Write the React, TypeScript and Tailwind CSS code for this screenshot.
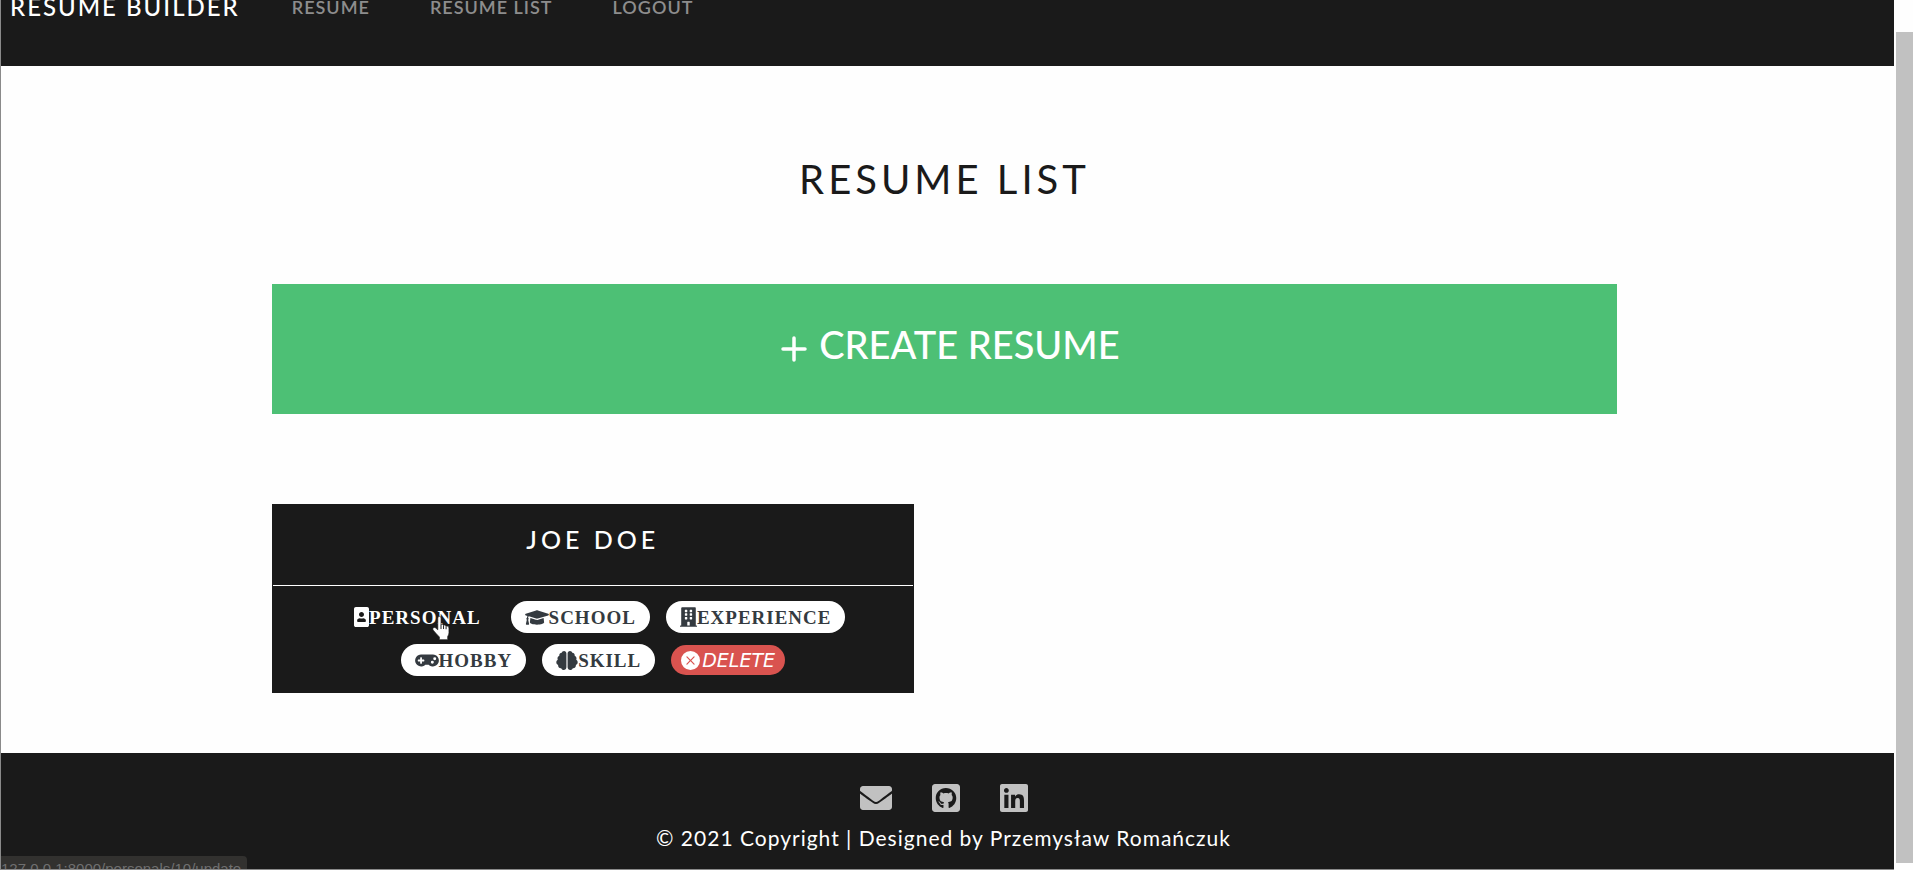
import type { ReactNode } from "react";
import { FaPortrait, FaGraduationCap, FaBuilding, FaGamepad, FaBrain, FaEnvelope, FaGithubSquare, FaLinkedin } from "react-icons/fa";
import { BsXCircleFill } from "react-icons/bs";

function Pill({ icon, label, active = false }: { icon: ReactNode; label: string; active?: boolean }) {
  return (
    <a
      href="#"
      className={
        active
          ? "flex h-8 items-center rounded-full px-3.5 font-['Liberation_Serif',serif] text-[19px] font-bold tracking-[1px] text-white"
          : "flex h-8 items-center rounded-full bg-white px-3.5 font-['Liberation_Serif',serif] text-[19px] font-bold tracking-[1px] text-[#343a40]"
      }
    >
      {icon}
      <span className="pt-0.5">{label}</span>
    </a>
  );
}

function Pointer() {
  return (
    <svg aria-hidden="true" viewBox="0 0 17 24" className="pointer-events-none absolute left-[159px] top-[110px] h-[26px] w-[18px]">
      <path
        d="M5.500 2.500a1.500 1.500 0 0 1 3 0V8.500c1.200-.4 2 .1 2.300.9 1.100-.4 2 0 2.300.9 1.600-.3 2.900.2 2.900 1.700v4.500c0 1.600-.6 2.500-1.200 3.500V23H7v-2.500C5.200 18.500 3 16.500 1 13.800c-.9-1.600.8-3 2.200-2l2.300 1.900z"
        fill="#fff"
        stroke="#1a1a1a"
        strokeWidth="0.6"
      />
      <path d="M8.500 8.500v4.500M10.900 9.500v3.500M13.300 10.500v2.700" stroke="#1a1a1a" strokeWidth="0.9" />
    </svg>
  );
}

export default function App() {
  return (
    <div className="relative flex h-screen overflow-hidden bg-[#fefefe] font-['Lato',sans-serif]">
      <div className="flex min-w-0 flex-1 flex-col border-b border-l border-[#8a8a8a]">
        <nav className="flex h-[66px] shrink-0 items-start bg-[#1a1a1a] text-lg font-semibold leading-7 tracking-[1px] text-[#8d8d8d]">
          <a href="#" className="-mt-[9px] ml-[9px] mr-12 whitespace-nowrap text-2xl font-medium leading-8 tracking-[2px] text-white">RESUME BUILDER</a>
          <div className="-mt-[7px] ml-1 flex gap-[60px]">
            <a href="#">RESUME</a>
            <a href="#">RESUME LIST</a>
            <a href="#">LOGOUT</a>
          </div>
        </nav>

        <div className="flex-1 pr-1.5">
          <main className="mx-auto w-[71.3%]">
            <h1 className="pt-[83px] text-center text-[40px] leading-[60px] tracking-[4px] text-[#1a1a1a]">RESUME LIST</h1>
            <a href="#" className="mt-[75px] flex h-[130px] items-center justify-center gap-3 bg-[#4dc075] pb-2.5 pl-3 text-[38px] font-medium text-white">
              <svg aria-hidden="true" viewBox="0 0 26 26" className="mt-2.5 size-[26px]" fill="none" stroke="currentColor" strokeWidth="3.500" strokeLinecap="round">
                <path d="M13 2v22M2 13h22" />
              </svg>
              CREATE RESUME
            </a>

            <section className="relative mt-[90px] h-[189px] w-[642px] border border-[#1a1a1a] bg-[#1a1a1a]">
              <h2 className="h-20 pt-4 text-center text-[25px] font-medium leading-9 tracking-[4px] text-white">JOE DOE</h2>
              <div className="flex flex-wrap justify-center gap-x-4 gap-y-[11px] border-t border-white px-12 pt-[15px]">
                <Pill active icon={<FaPortrait className="h-5 w-[15px]" />} label="PERSONAL" />
                <Pill icon={<FaGraduationCap className="h-[19px] w-6" />} label="SCHOOL" />
                <Pill icon={<FaBuilding className="h-5 w-[17px]" />} label="EXPERIENCE" />
                <Pill icon={<FaGamepad className="h-[19px] w-6" />} label="HOBBY" />
                <Pill icon={<FaBrain className="h-[19px] w-[22px]" />} label="SKILL" />
                <button type="button" className="mt-px flex h-[30px] items-center gap-0.5 rounded-full bg-[#d9534f] px-2.5 font-['DejaVu_Sans',sans-serif] text-[19px] italic text-white">
                  <BsXCircleFill />
                  DELETE
                </button>
              </div>
              <Pointer />
            </section>
          </main>
        </div>

        <footer className="flex h-[116px] shrink-0 flex-col items-center bg-[#1a1a1a] pr-2 pt-[29px] text-white">
          <div className="flex gap-10 text-[#c1c1c1]">
            <a href="#" aria-label="Email"><FaEnvelope className="h-8 w-8" /></a>
            <a href="#" aria-label="GitHub"><FaGithubSquare className="h-8 w-7" /></a>
            <a href="#" aria-label="LinkedIn"><FaLinkedin className="h-8 w-7" /></a>
          </div>
          <p className="mt-2.5 text-[21px] leading-7 tracking-[1px]">© 2021 Copyright | Designed by Przemysław Romańczuk</p>
        </footer>
      </div>

      <div aria-hidden="true" className="w-[19px] shrink-0 pb-[7px] pl-0.5 pt-8">
        <div className="h-full bg-[#c1c1c1]" />
      </div>

      <div className="absolute bottom-px left-px h-[13px] w-[246px] overflow-hidden rounded-tr bg-[#32312f] pt-1 font-['Liberation_Sans',sans-serif] text-[15px] leading-[18px] text-[#6f6f6f]">
        127.0.0.1:8000/personals/10/update
      </div>
    </div>
  );
}
